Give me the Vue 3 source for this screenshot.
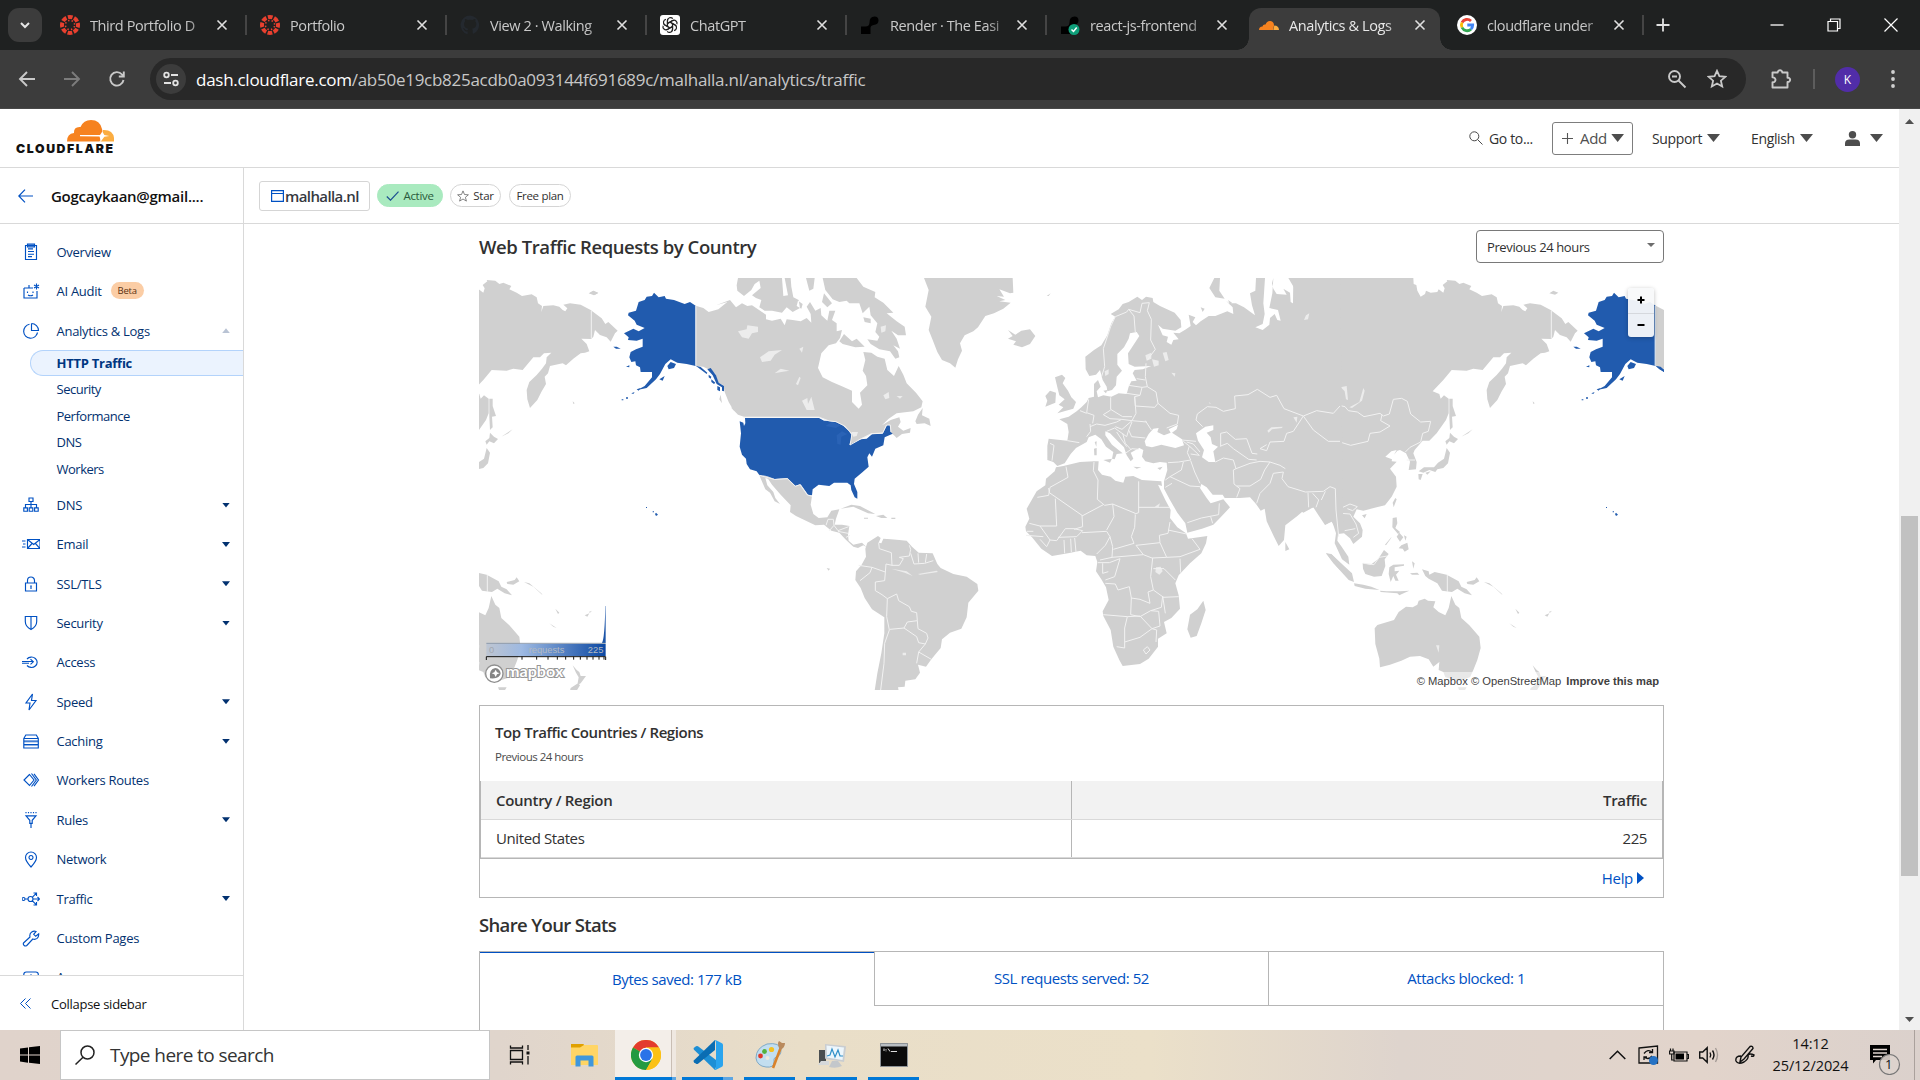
<script setup>
const tabs = [
  { icon: 'canvas', title: 'Third Portfolio D' },
  { icon: 'canvas', title: 'Portfolio' },
  { icon: 'github', title: 'View 2 · Walking' },
  { icon: 'gpt', title: 'ChatGPT' },
  { icon: 'render', title: 'Render · The Easi' },
  { icon: 'renderok', title: 'react-js-frontend' },
  { icon: 'cloud', title: 'Analytics & Logs', active: true },
  { icon: 'google', title: 'cloudflare under' },
]

const topNav = [
  { label: 'Overview', d: 'M3.5 2.5h11v14h-11zM6 5.8h5M6 8.5h6M6 11.2h6M6 13.6h4', fill: 'M5.5 1h7v3h-7z' },
  { label: 'AI Audit', badge: 'Beta', d: 'M2 6h9M2 6v10h13v-7M7 6V3M5.5 9.5v1.5M11 9.5v1.5M6 13q2.5 1.5 5 0M14.5 1.5v6M12 3l5 3M12 6l5-3' },
  { label: 'Analytics & Logs', up: true, d: 'M7.5 2.3a7 7 0 1 0 8 8.4M9.5 1.5v7h7a7 7 0 0 0-7-7M15.5 10.5a7 7 0 0 1-1.5 3' },
]
const subNav = ['HTTP Traffic', 'Security', 'Performance', 'DNS', 'Workers']
const nav = [
  { label: 'DNS', more: true, d: 'M7 2h4v3.5h-4zM9 5.5v6M3.5 11.5v-3h11v3M1.8 11.8h3.6v3.4h-3.6zM7.2 11.8h3.6v3.4h-3.6zM12.6 11.8h3.6v3.4h-3.6z' },
  { label: 'Email', more: true, d: 'M5.5 4.5h12.5v9h-12.5zM5.5 4.5l6.2 5l6.3-5M5.5 13.5l4.5-5M18 13.5l-4.5-5M0 6h3.5M1 9h2.5M0 12h3.5' },
  { label: 'SSL/TLS', more: true, d: 'M3.5 8h11v8h-11zM5.5 8v-2.5a3.5 3.5 0 0 1 7 0v2.5M9 11v3M8.2 11h1.6' },
  { label: 'Security', more: true, d: 'M3.3 2.5h11.4v5q0 5-5.7 8q-5.7-3-5.7-8zM9 2.5v13' },
  { label: 'Access', d: 'M5 6a5.7 5.2 0 1 1 0 6.5M0 8.5h11M8.5 6.2l2.8 2.6l-2.8 2.6M0 10.2h7' },
  { label: 'Speed', more: true, d: 'M10.5 1l-6.5 9h4l-1 7l7-9.5h-4.5z' },
  { label: 'Caching', more: true, d: 'M1.8 6.5l2-3.5h10.5l2 3.5v2.5h-14.5zM1.8 6.5h14.5M1.8 9v7h14.5v-7M1.8 12.5h14.5', tint: 'M2 9h14v1.5H2zM2 12.5h14v1.5H2z' },
  { label: 'Workers Routes', d: 'M7.5 3.5l-5.5 5.5l5.5 5.5l4.5-5.5zM9.5 2.5l4.8 6.5l-4.8 6.5M12 2.8l4.5 6.2l-4.5 6.2' },
  { label: 'Rules', more: true, d: 'M4 4.8h10l-3.8 4.5v3h-2.4v-3zM9 12v5M4 1v1.2M6.5 1v1.2M9 1v1.2M11.5 1v1.2M14 1v1.2' },
  { label: 'Network', d: 'M9 17q-5.5-6-5.5-9.5a5.5 5.5 0 0 1 11 0q0 3.5-5.5 9.5zM9 5.5a2 2 0 1 0 .01 0' },
  { label: 'Traffic', more: true, d: 'M0 9a1.5 1.5 0 1 0 3 0a1.5 1.5 0 1 0-3 0M3 9h3M6 9a2.5 2.5 0 1 0 5 0a2.5 2.5 0 1 0-5 0M11 9h6.5M15.5 7l2 2l-2 2M10.2 7.3l4-4M11.5 3h3v3M10.2 10.7l4 4M11.5 15h3v-3' },
  { label: 'Custom Pages', d: 'M1.5 14l6.5-6q-.8-3.5 1.7-5q2-1.3 4.3-.5l-2.3 2.8l2 2l3-2.5q.3 3-1.6 4.6q-2 1.5-4.3 .6l-6 6.5q-1.5 1-2.6 0q-1.3-1-.7-2.5z' },
  { label: 'Apps', d: 'M1.8 16v-9.5q0-2.5 2.5-2.5h9.5q2.5 0 2.5 2.5v9.5M5.5 9l3.5-2l3.5 2v4' },
]

const rows = [{ country: 'United States', traffic: '225' }]
const stats = ['Bytes saved: 177 kB', 'SSL requests served: 52', 'Attacks blocked: 1']
</script>

<template>
  <div class="screen">
    <div class="tabstrip">
      <div class="tabsearch">
        <svg width="14" height="14" viewBox="0 0 14 14"><path d="M3 5l4 4l4-4" fill="none" stroke="#e6e6e6" stroke-width="2" /></svg>
      </div>
      <div v-for="(t, i) in tabs" :key="i" class="tab" :class="{ active: t.active, bare: i === 5 }">
        <svg class="fav" width="20" height="20" viewBox="0 0 20 20">
          <g v-if="t.icon === 'canvas'" fill="none" stroke="#e8402f">
            <circle cx="10" cy="10" r="8" stroke-width="4" stroke-dasharray="4.7 1.583" stroke-dashoffset="2.35" />
            <circle cx="10" cy="10" r="4.6" stroke-width="1.5" stroke-dasharray="1.4 2.213" stroke-dashoffset="-1.1" />
          </g>
          <path v-else-if="t.icon === 'github'" fill="#24292f" d="M10 .5a9.5 9.5 0 0 0-3 18.5c.5.1.7-.2.7-.5v-2c-2.6.6-3.2-1.2-3.2-1.2c-.5-1-1-1.4-1-1.4c-.9-.6 0-.6 0-.6c1 .1 1.5 1 1.5 1c.9 1.5 2.3 1 2.8.8c.1-.6.3-1 .6-1.3c-2.1-.3-4.3-1.1-4.3-4.7c0-1 .4-1.9 1-2.5c-.1-.3-.4-1.3.1-2.6c0 0 .8-.2 2.6 1a9 9 0 0 1 4.8 0c1.8-1.2 2.6-1 2.6-1c.5 1.3.2 2.3.1 2.6c.6.6 1 1.5 1 2.5c0 3.6-2.2 4.4-4.3 4.7c.3.3.7.9.7 1.8v2.6c0 .3.2.6.7.5a9.5 9.5 0 0 0-3.4-18.2z" />
          <g v-else-if="t.icon === 'gpt'">
            <rect width="20" height="20" rx="3" fill="#fff" />
            <g fill="none" stroke="#222" stroke-width="1.2">
              <path v-for="a in 6" :key="a" :transform="'rotate(' + a * 60 + ' 10 10)'" d="M7.5 11.3V5.5a3 3 0 0 1 5.3-1.8M7.5 8.5l5-2.9a3 3 0 0 1 1.5-.3" />
            </g>
          </g>
          <g v-else-if="t.icon === 'render' || t.icon === 'renderok'">
            <path fill="#000" d="M1 19v-7.5h4.5q4 0 4-4q0-6 5-6q4 0 4 4t-5 4.5q-3 .5-3 3v6z" />
            <g v-if="t.icon === 'renderok'">
              <circle cx="14" cy="14.5" r="5.5" fill="#0f9f7a" />
              <path d="M11.5 14.5l2 2l3.2-4" fill="none" stroke="#fff" stroke-width="1.5" />
            </g>
          </g>
          <g v-else-if="t.icon === 'cloud'">
            <path fill="#f6821f" d="M0 15q0-3.5 3.5-3.6q.5-2.4 3-1.9q1.5-4 5-3.5q3.5.8 3.5 4.5l-1 4.5z" />
            <path fill="#fbad41" d="M14.3 15l1-4.5q4.5 0 4.7 4.5z" />
          </g>
          <g v-else>
            <circle cx="10" cy="10" r="10" fill="#fff" />
            <g fill="none" stroke-width="2.8">
              <path stroke="#ea4335" d="M5 7.5a5.7 5.7 0 0 1 9-1.5" />
              <path stroke="#fbbc05" d="M5 12.5a5.7 5.7 0 0 1 0-5" />
              <path stroke="#34a853" d="M14 14.2a5.7 5.7 0 0 1-9-1.7" />
              <path stroke="#4285f4" d="M10.3 10h5.4a5.7 5.7 0 0 1-1.8 4.2" />
            </g>
          </g>
        </svg>
        <span class="tabtitle">{{ t.title }}</span>
        <svg class="x" width="12" height="12" viewBox="0 0 12 12"><path d="M1.5 1.5l9 9M10.5 1.5l-9 9" stroke="#e0e0e0" stroke-width="1.6" /></svg>
      </div>
      <svg class="newtab" width="16" height="16" viewBox="0 0 16 16"><path d="M8 1.5v13M1.5 8h13" stroke="#e0e0e0" stroke-width="1.8" /></svg>
      <div class="winbtns">
        <svg width="14" height="14" viewBox="0 0 14 14"><path d="M.5 7h13" stroke="#fff" stroke-width="1.3" /></svg>
        <svg width="14" height="14" viewBox="0 0 14 14"><path d="M1 3.5h9.5v9.5h-9.5zM3.5 3.5v-2.5h9.5v9.5h-2.5" fill="none" stroke="#fff" stroke-width="1.2" /></svg>
        <svg width="14" height="14" viewBox="0 0 14 14"><path d="M.5 .5l13 13M13.5 .5l-13 13" stroke="#fff" stroke-width="1.2" /></svg>
      </div>
    </div>

    <div class="toolbar">
      <svg class="tb1" width="18" height="18" viewBox="0 0 18 18"><path d="M17 9H2.5M9 2l-7 7l7 7" fill="none" stroke="#c9c9c9" stroke-width="1.9" /></svg>
      <svg class="tb2" width="18" height="18" viewBox="0 0 18 18"><path d="M1 9h14.5M9 2l7 7l-7 7" fill="none" stroke="#7c7c7c" stroke-width="1.9" /></svg>
      <svg class="tb3" width="18" height="18" viewBox="0 0 18 18"><path d="M15.5 10a6.7 6.7 0 1 1-1.5-5.5l1.5 1.7M15.8 1.5v5h-5" fill="none" stroke="#c9c9c9" stroke-width="1.9" /></svg>
      <div class="omni">
        <div class="site">
          <svg width="18" height="18" viewBox="0 0 18 18" fill="none" stroke="#e3e3e3" stroke-width="1.8"><circle cx="4.5" cy="5" r="2.3" /><path d="M9 5h7M2 13h7" /><circle cx="13.5" cy="13" r="2.3" /></svg>
        </div>
        <div class="url"><b>dash.cloudflare.com</b>/ab50e19cb825acdb0a093144f691689c/malhalla.nl/analytics/traffic</div>
        <svg class="lens" width="20" height="20" viewBox="0 0 20 20" fill="none" stroke="#c9c9c9" stroke-width="1.9"><circle cx="7.5" cy="7.5" r="5.5" /><path d="M11.5 11.5l7 7M5 7.5h5" /></svg>
        <svg width="20" height="20" viewBox="0 0 20 20"><path d="M10 1.8l2.4 5.4l5.9 .6l-4.4 3.9l1.3 5.8l-5.2-3l-5.2 3l1.3-5.8l-4.4-3.9l5.9-.6z" fill="none" stroke="#c9c9c9" stroke-width="1.8" /></svg>
      </div>
      <svg class="puzzle" width="22" height="22" viewBox="0 0 22 22"><path d="M2.5 4.5h5.2a2.3 2.3 0 1 1 4.6 0h5.2v5.2a2.2 2.2 0 1 1 0 4.3v5.5h-15v-5.2a2.5 2.5 0 1 0 0-4.9z" fill="none" stroke="#c9c9c9" stroke-width="1.9" stroke-linejoin="round" /></svg>
      <i class="tbsep"></i>
      <div class="avatar">K</div>
      <svg width="6" height="20" viewBox="0 0 6 20" fill="#d0d0d0"><circle cx="3" cy="3" r="1.9" /><circle cx="3" cy="10" r="1.9" /><circle cx="3" cy="17" r="1.9" /></svg>
    </div>

    <div class="page">
      <div class="site-body">
        <header class="header">
          <div class="logo">
            <svg width="98" height="23" viewBox="0 0 98 23">
              <path fill="#f6821f" d="M51 22.5q0-8 7-8.5q-.5-6.5 6.5-6q3-7 10.5-7q9 0 11 9q1 3-1 7.5q-.3 3.5-1.5 5z" />
              <path fill="#fbad41" d="M84.5 22.5l2.5-11.5q10-.5 11 8v3.5z" />
              <path fill="#fff" d="M64 16h20l2.3-3.5l2 3.5l5 1.1l-5 .6l-3.3 4.5l-1.5-4.6l-19.5-.4z" />
            </svg>
            <div class="wordmark">CLOUDFLARE</div>
          </div>
          <div class="hright">
            <svg class="hs" width="14" height="14" viewBox="0 0 14 14"><circle cx="5.3" cy="5.3" r="4.5" fill="none" stroke="#4a4a4a" /><path d="M8.5 8.5l5 5" stroke="#4a4a4a" /></svg>
            <span class="ht goto">Go to...</span>
            <div class="addbtn">
              <svg width="11" height="11" viewBox="0 0 11 11"><path d="M5.5 0v11M0 5.5h11" stroke="#555" stroke-width="1.1" /></svg>
              <span>Add</span><i class="car"></i>
            </div>
            <span class="ht sup">Support</span><i class="car"></i>
            <span class="ht eng">English</span><i class="car"></i>
            <svg class="person" width="15" height="15" viewBox="0 0 15 15" fill="#4d4d4d"><circle cx="7.5" cy="3.7" r="3.7" /><path d="M0 15v-2.5q0-4 4.5-4h6q4.5 0 4.5 4v2.5z" /></svg>
            <i class="car"></i>
          </div>
        </header>

        <div class="cols">
          <aside class="side">
            <div class="account">
              <svg width="15" height="14" viewBox="0 0 15 14"><path d="M15 7H1M7 .7l-6.2 6.3l6.2 6.3" fill="none" stroke="#0051c3" stroke-width="1.2" /></svg>
              <span>Gogcaykaan@gmail....</span>
            </div>
            <nav class="nav">
              <div v-for="n in topNav" :key="n.label" class="item">
                <svg class="ic" width="18" height="18" viewBox="0 0 18 18"><path v-if="n.fill" :d="n.fill" fill="#7aa3e0" /><path :d="n.d" /></svg>
                <span>{{ n.label }}</span>
                <em v-if="n.badge">{{ n.badge }}</em>
                <i v-if="n.up" class="up"></i>
              </div>
              <div class="subs">
                <div v-for="(s, i) in subNav" :key="s" class="sub" :class="{ on: i === 0 }">{{ s }}</div>
              </div>
              <div v-for="n in nav" :key="n.label" class="item">
                <svg class="ic" width="18" height="18" viewBox="0 0 18 18"><path v-if="n.tint" :d="n.tint" fill="#8fb2e4" stroke="none" /><path :d="n.d" /></svg>
                <span>{{ n.label }}</span>
                <i v-if="n.more" class="down"></i>
              </div>
            </nav>
            <div class="collapse">
              <svg width="11" height="11" viewBox="0 0 11 11"><path d="M5.5 .5l-5 5l5 5M10.5 .5l-5 5l5 5" fill="none" stroke="#0051c3" /></svg>
              <span>Collapse sidebar</span>
            </div>
          </aside>

          <main class="main">
            <div class="crumbs">
              <div class="domain">
                <svg width="13" height="12" viewBox="0 0 13 12"><path d="M.6 .6h11.8v10.8h-11.8zM.6 3.5h11.8" fill="none" stroke="#0051c3" stroke-width="1.2" /></svg>
                <span>malhalla.nl</span>
              </div>
              <div class="pill green">
                <svg width="13" height="10" viewBox="0 0 13 10"><path d="M.8 5.5l3.7 3.7l8-8.5" fill="none" stroke="#1d4f91" stroke-width="1.2" /></svg>Active
              </div>
              <div class="pill star">
                <svg width="12" height="12" viewBox="0 0 12 12"><path d="M6 .9l1.5 3.6l3.9 .3l-3 2.5l1 3.8l-3.4-2.1l-3.4 2.1l1-3.8l-3-2.5l3.9-.3z" fill="none" stroke="#666" stroke-width=".8" /></svg>Star
              </div>
              <div class="pill plan">Free plan</div>
            </div>

            <div class="content">
              <div class="headrow">
                <h2>Web Traffic Requests by Country</h2>
                <div class="select"><span>Previous 24 hours</span><i></i></div>
              </div>

              <div class="map">
                <svg width="1185" height="412" viewBox="27 24 3555 1236">
                  <defs>
                    <linearGradient id="scale" x1="0" x2="1"><stop offset="0" stop-color="#9db4d8" stop-opacity=".35" /><stop offset=".3" stop-color="#9db9e2" /><stop offset="1" stop-color="#0b48a3" /></linearGradient>
                    <g id="asia" transform="translate(2490 0)">
                      <path fill="#d0d0d0" d="M-20 24L340 24L341 42L349 45L352 62L362 80L375 72L378 62L392 68L412 66L416 58L430 68L434 55L428 45L442 34L440 30L466 32L478 42L490 38L514 48L508 58L530 68L546 78L575 73L590 82L594 100L606 108L604 126L610 108L640 106L658 110L668 120L676 124L682 115L670 104L690 100L722 104L752 120L785 145L796 162L805 156L833 182L825 190L812 215L800 202L780 195L765 180L760 200L754 207L724 206L740 222L748 244L735 248L722 250L700 266L678 286L668 280L630 288L624 310L614 320L618 342L604 366L592 390L570 414L562 388L560 360L568 336L590 315L606 296L618 280L620 262L634 248L612 250L600 262L580 262L548 300L520 296L500 302L455 300L430 330L398 364L418 372L422 386L432 376L446 386L446 430L438 450L410 490L388 512L368 512L344 540L340 550L350 576L348 598L326 600L330 575L318 550L300 540L292 542L282 554L290 540L274 544L256 560L276 568L275 574L290 575L270 596L288 620L290 650L275 680L255 706L230 712L190 722L170 718L160 740L180 760L188 780L186 800L160 822L150 805L132 790L114 792L112 812L125 830L145 860L148 884L126 868L104 820L108 790L96 752L75 765L55 735L40 712L10 728L-30 700Z" />
                      <g fill="#d0d0d0">
                        <path d="M448 386L458 386L458 408L468 438L456 440L458 472L450 480L448 440ZM450 488L462 500L474 507L462 520L448 514L440 524L436 514L448 504ZM440 534L450 548L444 580L430 594L412 598L406 606L388 600L370 608L356 604L372 592L402 592L414 578L432 566ZM355 612L368 612L362 630L356 628ZM376 608L392 604L382 614ZM278 698L286 684L290 688L281 712ZM186 736L200 732L194 745ZM278 744L290 742L292 760L286 774L300 786L294 792L277 772ZM312 796L320 800L316 812ZM298 788L310 802L300 815L290 800ZM304 826L322 818L326 838L314 845L308 836L296 835ZM255 824L275 800L272 806L258 826ZM78 850L94 852L130 886L156 910L162 936L146 930L110 890ZM162 940L190 944L214 950L238 960L196 956L164 948ZM188 880L212 884L234 868L252 840L266 852L254 868L256 888L245 918L222 920L196 912L189 896ZM268 892L280 884L312 883L312 887L284 892L284 904L298 902L288 914L296 932L286 932L280 918L272 936L266 912ZM336 874L344 880L340 896ZM330 910L352 908L358 914L336 914ZM240 962L260 964L300 964L328 962L314 968L298 976L292 970L242 966ZM366 898L386 904L388 914L404 906L440 914L476 934L484 950L500 958L516 976L494 970L472 956L456 966L426 962L412 940L386 926L376 918ZM500 936L524 930L530 922L538 934L520 944L502 942ZM552 936L580 950L608 976L604 970L568 940ZM628 1060L650 1074L640 1070ZM646 1016L658 1028L654 1032ZM734 1036L748 1030L742 1040ZM746 1026L756 1022L750 1028ZM748 70L760 62L775 68L765 74ZM484 500L518 478L505 490ZM698 394L704 400L700 402Z" />
                        <path d="M224 1075L232 1065L262 1056L282 1050L296 1026L318 1010L338 1012L352 1004L356 992L374 986L384 992L406 994L400 1012L416 1026L436 1036L446 1014L454 978L466 1004L478 1014L484 1044L508 1066L538 1100L542 1134L532 1170L520 1200L510 1222L478 1232L436 1222L430 1206L416 1200L418 1176L400 1190L386 1168L360 1158L330 1160L304 1172L270 1184L240 1192L238 1166L226 1122ZM474 1252L500 1252L494 1262L478 1262ZM698 1186L710 1200L718 1206L722 1218L738 1218L722 1240L712 1245L716 1222L708 1208ZM714 1240L720 1246L710 1262L690 1262L692 1254Z" />
                      </g>
                      <path class="bd" d="M754 122V206M442 914V966M-5 440L20 442L50 422L100 430L108 404L135 410L145 422L172 426L192 440L240 430L250 438L268 432L280 388L305 385L322 394L332 432L362 456L392 454L385 484L368 490L362 516L330 532L316 546M10 440L40 466L42 488L66 494L86 514L120 516L152 526L204 514L210 490L240 486L270 468L242 452L246 434M0 660L50 664L86 650L102 660L104 700L120 716L150 702L172 710L158 722L142 716M104 702L98 720L116 718L124 736L96 740M124 730L150 732L168 762L176 790L160 802M134 782L166 776M190 880L222 884L238 862L262 858M0 660L5 690L22 706M60 700L78 662M320 570H345" />
                      <path class="lake" d="M148 412L178 396L190 354L194 362L186 392L156 414ZM122 352L140 348L144 390L138 388L134 364ZM12 152L20 134L30 130L24 150ZM408 1126L418 1126L416 1148Z" />
                    </g>
                  </defs>
                  <use href="#asia" />
                  <use href="#asia" x="-2880" />

                  <g transform="translate(1410 0)">
                    <path fill="#d0d0d0" d="M1200 24L1045 24L1064 56L1066 104L1052 96L1050 68L1030 56L1040 74L1010 72L1000 56L996 40L1000 24L997 70L988 114L1014 120L1022 152L1012 150L1004 132L990 144L988 164L968 180L946 172L968 162L974 132L970 100L975 24L948 24L946 62L930 70L936 106L945 136L912 112L888 100L868 100L858 92L878 112L880 132L862 124L826 138L806 138L782 154L768 166L758 156L766 142L746 134L752 168L738 178L718 190L700 188L716 208L700 210L694 224L680 216L684 200L668 196L654 164L668 176L706 182L724 172L722 150L704 128L660 108L640 96L638 84L618 80L606 90L592 80L566 96L548 102L536 118L512 132L526 140L514 160L502 196L484 226L462 240L436 260L437 298L448 318L468 314L480 300L488 330L500 350L502 364L516 360L528 346L530 320L546 302L532 284L532 252L552 232L566 206L570 190L590 186L598 198L576 232L564 250L566 282L584 290L634 288L608 298L584 300L578 310L590 332L574 334L566 350L560 372L536 370L514 380L490 376L474 382L470 364L482 350L474 330L462 342L462 380L446 384L440 396L424 412L410 424L386 440L358 448L382 462L386 486L382 512L326 506L322 528L322 570L340 576L352 588L374 580L392 552L408 534L440 516L446 502L466 494L484 508L498 530L520 546L516 566L524 568L530 552L548 550L516 524L496 496L496 484L510 490L530 510L552 532L560 556L572 574L580 566L572 548L598 534L610 540L606 560L616 574L640 580L660 576L680 578L682 600L672 634L672 656L690 690L712 728L736 760L742 788L786 776L820 764L842 742L870 712L850 688L836 692L812 700L800 684L780 654L784 642L800 652L818 674L848 674L854 684L900 684L930 682L948 702L962 722L974 716L980 754L1002 800L1016 828L1032 810L1036 766L1072 738L1100 714L1130 712L1140 730L1156 764L1175 755L1190 780L1210 780Z" />
                    <path fill="#d0d0d0" d="M348 592L370 588L420 576L462 574L476 574L474 600L486 614L512 620L526 632L550 638L556 620L580 618L606 630L640 632L664 634L666 648L654 644L676 690L692 720L690 744L712 772L738 790L744 806L802 798L798 820L784 850L750 880L716 916L706 940L716 976L720 1016L694 1044L672 1056L680 1090L654 1106L654 1130L626 1166L600 1182L548 1188L538 1170L520 1130L512 1080L490 1038L488 1024L506 990L498 952L484 928L468 904L472 876L466 858L440 856L422 842L384 850L336 858L304 836L276 802L258 784L256 770L268 746L260 716L290 664L316 646L318 626L344 604Z" />
                    <path fill="#d0d0d0" d="M790 992L797 1020L784 1060L770 1098L752 1103L742 1078L750 1034L772 1018ZM1036 816L1048 838L1036 843ZM345 322L366 314L376 324L368 340L384 362L394 382L408 396L400 416L378 422L352 430L370 412L356 404L374 388L358 376L352 352ZM316 378L330 362L348 368L346 398L316 410L322 392ZM204 180L226 194L244 182L270 178L286 198L270 222L246 232L220 224L228 214L204 206L218 198ZM823 24L808 54L826 82L854 86L838 62L840 24ZM782 112L794 116L788 126ZM864 90L876 98L870 104ZM490 570L516 566L510 578ZM462 536L470 534L470 556L463 556ZM464 516L470 514L469 530ZM580 590L604 592L590 596ZM652 594L668 590L660 600ZM490 362L502 360L498 370ZM320 78L332 70L326 78ZM1158 850L1176 854L1200 880V900L1180 880Z" />
                    <path fill="#fff" d="M618 528L614 514L626 492L640 476L656 474L652 486L672 496L692 488L686 478L714 464L710 478L696 488L726 508L732 526L706 534L664 524L636 532ZM768 490L796 470L820 466L820 480L800 488L812 502L816 522L834 530L820 544L826 576L806 576L786 562L792 540L774 512Z" />
                    <path class="lake" d="M616 256L634 248L634 266L620 272ZM636 268L656 272L656 286L642 290ZM668 248L680 246L686 270L676 274ZM694 308L706 310L704 320ZM494 304L506 298L506 312L496 318ZM648 892L662 890L668 904L658 914L646 906ZM982 482L994 472L1028 470L1026 474L996 478L986 488ZM1060 442L1072 440L1070 458ZM1092 150L1098 136L1108 130L1104 148ZM644 710L660 700L656 712ZM806 396L812 400L810 402Z" />
                    <path class="bd" d="M484 322L494 290L490 236L512 170L526 140L560 126L566 118L582 138L586 188M566 118L600 128L606 100L628 98L622 122L634 148L632 210L646 238L622 270M618 280L616 320L622 350M590 326L616 330M566 346L606 352M622 350L648 366L654 400L690 430L716 436L712 462L680 474M560 370L600 376L606 352L622 350M600 376L584 380L586 408L644 412L654 400M584 380L588 430L576 452L620 456M512 382V418L548 440L576 440M446 388L440 428L462 436L458 460M420 422L440 430M490 434L512 420M490 434L510 446L545 448M450 470L470 462L495 466L530 456L545 448L576 452L546 478L526 470M440 500L452 484L450 462M500 484L524 474L560 500L566 480M530 486L546 510L560 530M548 490L556 520L574 540M576 456L566 480L575 500L616 504M616 452L634 480M556 550L576 536L596 538M382 512L418 518M330 520L342 526L336 572M730 514L748 528L742 548L752 570L716 576L684 578M748 528L778 556L752 552M740 516L760 522L780 546M726 510L768 514M788 470L768 450L772 432L802 410L828 412L850 424L886 416L884 378L924 374L952 358L990 382L1010 376L1032 416L1090 438M1090 438L1060 484L1040 490L1032 514L990 516L980 542L960 536L980 524M842 530V490L860 486L886 508L920 506L936 550L952 552M842 528L862 520L880 536L926 568L950 570M826 576L850 564L880 570L888 596L880 600L882 642L900 656L890 682M888 596L930 580L960 574L990 576L974 600L962 628L930 648L890 648M990 576L1020 586L1036 596M1090 438L1120 480L1165 514L1200 514M1090 438L1130 422L1180 430L1200 408M950 700L960 670L990 640L1000 610L1030 606L1026 626L1044 650L1096 666L1150 664L1170 650L1186 656L1188 720L1196 800M1104 668L1106 712M1118 670L1136 690L1128 712M1144 690L1156 664M676 630L690 620L724 600L730 576M690 620L750 648L780 650M752 572L764 606L780 640M676 652L696 640M742 758L784 744L836 734L838 700M812 740L818 760M378 590L384 622L330 652L326 676L292 682M326 654L328 668L426 736L428 770L402 778M346 686L350 768L300 768M462 576L460 602L474 630L472 688L494 706L518 702L586 730M426 738L490 704M596 634V728L584 732M596 712H690M518 702L522 740L500 780M586 734L584 772L574 800L582 820L520 838M690 756L684 790L658 796M684 780L740 792M268 760L300 768L330 810L350 812M330 810L320 830L300 808M260 784H280M258 796L310 800M350 812L376 776L402 776L428 782L410 800L354 802M372 810L374 850M392 806L394 846M404 804L408 846M426 788L500 784L510 800L496 826L470 852M510 800L518 830L516 862L480 870M516 862L610 854L588 826L660 818L658 796M660 818L680 862L720 860L780 838L756 806M610 854L636 864L680 862M638 864L632 920L640 960L668 980M720 866L722 908M640 896L672 896L706 930M474 878H508L540 866L524 920L496 930M488 880V910L505 905M496 940L526 942L534 960L568 950L574 984L600 988L630 1000L624 966L640 960M574 984L572 1034L600 1040L632 1022L664 1012L668 978L676 1030M668 982L716 980M490 1034L562 1040L600 1038L636 1076L660 1068L656 1024L632 1022M562 1040L554 1074V1134L530 1130M554 1116L600 1102L636 1076L650 1080L648 1116M610 1140L622 1130L630 1140L618 1152Z" />
                  </g>

                  <g fill="#d0d0d0">
                    <path d="M677 107L700 114L716 126L745 118L772 96L738 106L780 90L798 112L816 100L832 108L846 106L876 126L888 134L888 148L906 152L932 146L944 166L950 148L968 150L992 154L1010 144L1024 158L1022 132L1010 110L1020 96L1036 122L1052 114L1054 136L1072 152L1078 122L1096 122L1086 150L1100 160L1100 184L1116 180L1110 204L1098 220L1076 226L1054 250L1044 294L1058 322L1086 336L1114 348L1146 362L1146 396L1166 416L1176 404L1170 368L1192 346L1188 318L1178 302L1186 270L1180 246L1204 248L1222 260L1244 266L1252 300L1272 318L1286 288L1300 314L1310 340L1338 368L1358 394L1354 412L1330 424L1280 430L1256 446L1236 466L1262 450L1288 442L1292 456L1284 470L1300 482L1322 474L1320 488L1296 492L1280 504L1272 496L1262 488L1260 464L1248 466L1238 488L1205 490L1172 506L1140 524L1146 496L1124 468L1098 455L1078 453L1046 441L825 441L790 420L776 396L764 366L760 346L745 338L735 310L715 298L700 290L677 288Z" />
                    <path d="M804 24L800 46L802 62L822 78L844 60L854 42L868 32L872 54L846 76L858 84L874 90L868 112L884 122L906 122L936 128L950 112L968 126L990 114L986 90L970 82L964 50L962 24L944 24L954 76L940 78L936 24ZM1008 24L1018 62L1030 56L1034 24ZM984 92L998 102L994 116L980 108ZM1058 24L1066 60L1088 88L1108 96L1130 92L1138 100L1168 100L1178 130L1198 110L1202 136L1222 160L1216 186L1228 200L1222 212L1192 208L1202 222L1228 238L1260 244L1276 266L1288 262L1284 244L1270 226L1290 236L1280 206L1264 182L1284 196L1308 196L1304 170L1280 154L1250 130L1270 128L1240 98L1214 82L1216 66L1180 50L1160 24ZM1062 70L1086 100L1072 112L1056 96ZM1122 192L1146 214L1160 206L1184 230L1156 232L1118 222L1108 214ZM1180 142L1202 146L1202 160L1184 156ZM1336 454L1344 434L1358 414L1356 436L1378 446L1382 468L1364 460L1340 462ZM782 412L800 420L822 436L826 442L804 434ZM752 374L756 400L748 388ZM1112 716L1144 704L1170 708L1200 724L1216 732L1194 730L1150 710ZM1218 738L1240 734L1252 744L1234 744ZM1182 743H1194V746H1182ZM1264 743H1276V747H1264Z" />
                    <path d="M868 616L890 618L914 628L952 625L976 648L990 642L1012 674L1026 678L1022 704L1030 732L1046 744L1072 742L1084 722L1108 718L1098 746L1094 764L1116 764L1138 768L1134 794L1136 812L1150 824L1176 818L1190 832L1180 826L1164 834L1150 830L1126 808L1108 788L1084 782L1062 764L1036 766L978 738L960 726L962 706L932 674L906 644L894 626L886 624L892 646L910 666L916 684L930 702L914 694L900 668L886 658Z" />
                    <path d="M1186 836L1192 818L1224 798L1232 804L1226 818L1234 820L1240 806L1262 808L1288 810L1310 812L1326 830L1346 848L1388 850L1402 882L1412 894L1450 912L1490 920L1522 942L1525 962L1495 998L1490 1042L1474 1076L1440 1088L1416 1108L1412 1134L1384 1168L1368 1190L1344 1184L1350 1208L1336 1228L1306 1232L1304 1250L1284 1252L1286 1262H1214L1222 1210L1234 1150L1243 1090L1243 1042L1206 1018L1184 984L1172 954L1156 930L1158 904L1174 886L1188 860Z" />
                    <path d="M1362 24L1376 60L1372 80L1366 110L1384 140L1376 180L1388 210L1402 246L1416 270L1440 280L1456 293L1464 268L1476 242L1470 220L1484 196L1510 184L1524 172L1546 138L1572 130L1600 116L1622 98L1588 94L1606 90L1580 78L1602 80L1588 58L1620 70L1630 68L1628 24ZM356 70L370 62L384 70L372 76ZM1070 894L1080 896L1076 902Z" />
                  </g>
                  <path class="bd" d="M1068 766L1074 748H1090L1092 766L1078 782M1092 766L1104 782L1136 770M1104 784L1134 790M1128 802L1140 796M1226 818L1228 836L1264 848L1266 886L1248 882L1244 932L1216 936V962L1236 974L1252 986L1250 1040L1258 1080L1244 1120L1242 1180L1232 1260M1166 886L1206 892L1200 908L1170 932M1206 892L1246 906M1266 886H1288L1300 866L1288 862L1318 858L1322 838L1318 826M1322 850L1332 882L1364 880L1390 872M1344 850L1346 878M1370 852L1366 878M1252 986L1280 972L1286 992L1318 1010L1324 1024L1340 1028L1342 1052L1312 1056L1302 1074L1260 1078M1302 1074L1340 1100L1346 1118L1366 1122L1374 1104L1370 1090L1344 1076L1342 1052M1366 1122L1346 1146L1340 1180M1346 1146L1384 1168" />
                  <path class="lake" d="M804 184L830 178L832 166L864 170L864 186L846 190L836 206L816 202ZM870 262L896 244L936 240L914 254L902 272L876 276ZM914 310L932 296L958 302L934 306ZM978 342L988 320L992 324L984 346ZM988 236L1000 230L996 248ZM996 392L1012 384L1014 402L1024 380L1034 420L1010 420ZM1240 376L1256 366L1258 384L1246 388ZM1280 378H1298L1290 386ZM1144 486L1164 486L1160 498L1150 500ZM1232 170L1248 166L1246 184L1234 188ZM1264 896L1310 904L1328 918L1304 908ZM1344 912L1400 902L1404 906L1350 914ZM1298 1148H1308V1156H1298Z" />

                  <g id="alaska" fill="#215bae">
                    <path d="M677 107L660 96L644 102L612 90L588 86L584 78L566 82L552 68L546 78L530 80L524 90L506 96L498 122L476 128L474 136L494 152L500 164L524 174L506 184L490 176L462 190L476 202L474 210L500 212L518 206V230L498 238L482 246L478 262L484 276L496 274L498 286L510 292L512 306L546 306L546 322L524 348L502 360L530 354L558 328L570 312L586 282L602 268L622 278L650 282L677 288Z" />
                    <path d="M592 288L602 276L618 282L612 294L596 298ZM568 328L584 318L578 332ZM500 358L512 354L506 362ZM484 370L494 366L490 372ZM468 382H474V386H468ZM455 388H460V391H455ZM430 230L440 230L452 236H438ZM468 290L478 286V292Z" />
                    <path d="M677 287L692 291L712 308L710 312L694 300ZM712 298L722 294L738 316L746 338L762 348V364L756 362L756 352L740 342L728 316ZM716 314L724 320L722 326L716 322ZM724 328L736 338L732 342L724 336ZM742 348L750 352L750 364L742 360Z" />
                  </g>
                  <path d="M677.5 107V287" stroke="#f4f4f4" stroke-width="3" />
                  <use href="#alaska" x="2880" />
                  <path fill="#d0d0d0" d="M3557 107L3582 120V298L3570 290L3557 288Z" />
                  <path fill="#215bae" d="M3557 288L3572 290L3582 300V306L3568 298ZM555 732L558 728L564 734L558 738ZM548 724H552V727H548ZM528 711H531V714H528ZM3435 732L3438 728L3444 734L3438 738ZM3428 724H3432V727H3428ZM3408 711H3411V714H3408Z" />
                  <path d="M3555.5 107V287" stroke="#f4f4f4" stroke-width="3" />
                  <path fill="#215bae" d="M825 444H1047L1062 452L1080 453L1098 456L1118 466L1136 482L1144 494L1143 512L1138 524L1172 508L1190 506L1206 493L1238 491L1250 466L1259 465L1262 486L1268 491L1244 502L1240 526L1216 536L1206 560L1198 550L1192 562L1196 590L1178 606L1154 626L1152 642L1162 666L1162 686L1154 682L1144 660L1142 646L1132 638L1092 638L1078 648L1046 644L1028 658L1026 676L1014 674L992 643L976 647L952 624L914 627L890 618L868 615L860 604L840 598L830 582L828 566L816 554L809 530L813 490L809 454L820 458L822 468L826 460Z" />
                  <path fill="#2a63b6" d="M1066 468L1086 456L1112 466L1098 474ZM1100 496L1116 484L1132 492L1114 500L1112 524L1102 522Z" />
                  <path d="M820 441.5H1047L1078 453L1098 455L1124 468L1146 492L1140 525L1170 508L1205 491L1238 489L1250 465H1261L1263 486M868 616L914 628.5L952 626L976 649L990 644L1012 675L1026 679" fill="none" stroke="#f1f1f1" stroke-width="3" />

                  <path d="M396 1119Q404 1105 406 1008H407V1119Z" fill="#1c55a8" />
                  <path d="M49 1120H407" stroke="#8b99ad" stroke-width="3" />
                  <path d="M49 1122H407V1158H49Z" fill="url(#scale)" />
                  <path d="M49 1170V1160H407V1170M156 1160v9M200 1160v9M234 1160v9M262 1160v9M287 1160v9M311 1160v9M331 1160v9M351 1160v9M369 1160v9M387 1160v9M402 1160v9" fill="none" stroke="#111" stroke-width="3" />
                  <g font-family="Liberation Sans, Arial, sans-serif" font-size="28" fill="#b3b9c1">
                    <text x="57" y="1149" fill="#a2a8b1">0</text><text x="176" y="1149" textLength="107">requests</text><text x="353" y="1149" textLength="47">225</text>
                  </g>
                  <circle cx="73" cy="1211" r="26" fill="#fff" stroke="#8f8f8f" stroke-width="4" />
                  <path d="M60 1225Q56 1197 76 1194Q90 1196 92 1210Q90 1228 60 1225Z" fill="#858585" />
                  <path d="M77 1199l4 8l8 3l-8 3l-4 8l-4-8l-8-3l8-3z" fill="#fff" />
                  <text x="108" y="1222" textLength="172" lengthAdjust="spacingAndGlyphs" font-family="Lato, sans-serif" font-weight="700" font-size="46" fill="#fff" stroke="#969696" stroke-width="6" paint-order="stroke">mapbox</text>
                </svg>
                <div class="zoom"><div><svg width="8" height="8" viewBox="0 0 8 8"><path d="M4 .5v7M.5 4h7" stroke="#000" stroke-width="2" /></svg></div><div><svg width="8" height="8" viewBox="0 0 8 8"><path d="M.5 4h7" stroke="#000" stroke-width="2" /></svg></div></div>
                <div class="attrib"><span>© Mapbox</span> <span>© OpenStreetMap</span> <b>Improve this map</b></div>
              </div>

              <section class="card">
                <h3>Top Traffic Countries / Regions</h3>
                <p>Previous 24 hours</p>
                <div class="table">
                  <div class="tr th"><div>Country / Region</div><div>Traffic</div></div>
                  <div v-for="r in rows" :key="r.country" class="tr"><div>{{ r.country }}</div><div>{{ r.traffic }}</div></div>
                </div>
                <div class="help">Help<i></i></div>
              </section>

              <h2 class="share">Share Your Stats</h2>
              <div class="stats">
                <div v-for="(s, i) in stats" :key="s" class="stat" :class="{ on: i === 0 }">{{ s }}</div>
              </div>
            </div>
          </main>
        </div>
      </div>
      <div class="scroll"><i class="sup-arrow"></i><div class="thumb"></div><i class="sdown-arrow"></i></div>
    </div>

    <div class="taskbar">
      <div class="start"><svg width="20" height="18" viewBox="0 0 20 18"><path d="M0 2.5l8-1.1v7.2H0zM9 1.3L20 0v8.6H9zM0 9.5h8v7.2l-8-1.1zM9 9.5h11V18L9 16.7z" /></svg></div>
      <div class="search">
        <svg width="20" height="20" viewBox="0 0 20 20"><circle cx="12.5" cy="7.5" r="6.5" fill="none" stroke="#222" stroke-width="1.5" /><path d="M8 12.3L.5 19.5" stroke="#222" stroke-width="1.5" /></svg>
        <span>Type here to search</span>
      </div>
      <div class="app tv"><svg width="22" height="20" viewBox="0 0 22 20" fill="none" stroke="#111" stroke-width="1.3"><path d="M1.5 5.5h12v9h-12zM1.5 .5v2.5h12v-2.5M1.5 19.500v-2.500h12v2.500M19 0v5M19 11v8.500" /><path d="M17.500 6.500h3v3h-3z" fill="#111" stroke="none" /></svg></div>
      <div class="app files"><svg width="28" height="24" viewBox="0 0 28 24"><path d="M1 1h12q1 0 1 1v3h-13z" fill="#e0a000" /><path d="M1 4.500h9l4-2.500h13q1 0 1 1v19h-27z" fill="#ffd565" /><path d="M5.500 23.500V14q0-1.500 1.500-1.500h15q1.500 0 1.500 1.500v9.500h-5v-6h-8v6z" fill="#3f97dc" /></svg></div>
      <div class="app current"><svg width="30" height="30" viewBox="0 0 30 30"><circle cx="15" cy="15" r="15" fill="#fbc116" /><path d="M15 15L2 7.5A15 15 0 0 1 28 7.5H15z" fill="#e33b2e" /><path d="M15 15l-13-7.5A15 15 0 0 0 15 30l6.5-11.3z" fill="#249a41" /><path d="M15 7.500h13A15 15 0 0 1 15 30l6.500-11.300z" fill="#fbc116" /><circle cx="15" cy="15" r="7.2" fill="#fff" /><circle cx="15" cy="15" r="5.9" fill="#2a73e8" /></svg></div>
      <div class="app open two"><svg width="30" height="30" viewBox="0 0 30 30"><path d="M1 9.8q-1-1 0-2l2-1.500q1-.5 2 0L23 20v7L22 30z" fill="#1e8fd5" /><path d="M1 20.200q-1 1 0 2l2 1.500q1 .5 2 0L22 10V0z" fill="#0a6db3" /><path d="M21.500 0q1 0 2 .5l5 2.500q1.500.7 1.500 2v20q0 1.300-1.500 2l-5 2.500q-1 .5-2 .5q1.500-1 1.500-3V3q0-2-1.500-3z" fill="#2aa4ee" /></svg></div>
      <div class="app open"><svg width="30" height="30" viewBox="0 0 30 30"><path d="M1 18q0-10 11-14q13-2 14 6q0 6-5 7q-3 1-2 5q0 6-8 5q-9-1-10-9z" fill="#c2def0" stroke="#7fa9c6" /><circle cx="5.500" cy="16" r="2.400" fill="#e0392b" /><circle cx="9.500" cy="11.500" r="2.400" fill="#56b13c" /><circle cx="16.500" cy="9.500" r="2.600" fill="#f4c020" /><circle cx="12.500" cy="18" r="2" fill="#efe7db" /><path d="M26 7l-8 21" stroke="#d9822b" stroke-width="2.600" /><path d="M24 8q-2-5 0-7l3 2l3 0q0 5-5 7z" fill="#b98a5d" /></svg></div>
      <div class="app open"><svg width="30" height="30" viewBox="0 0 30 30"><path d="M2 10h7v13h-7z" fill="#4a4e50" /><path d="M4 21h8v4h-11z" fill="#d5d8da" /><path d="M8 4l20 2q1 0 1 1l-2 15l-18-3q-1 0-1-1z" fill="#c9cdd1" /><path d="M9.500 5.500l17.500 2l-1.500 12.500l-15.500-2.500z" fill="#edf6fc" /><path d="M10 16l3-1l2-6l3 8l3-7l2 6h3" fill="none" stroke="#2f8fc8" stroke-width="1.200" /><path d="M15 21h6l4 5q-6 3-13 1z" fill="#c3c7cb" /></svg></div>
      <div class="app open"><svg width="28" height="24" viewBox="0 0 28 24"><path d="M.5 .5h27v23h-27z" fill="#0b0b0b" stroke="#8d9296" /><path d="M1 1h26v2.500h-26z" fill="#b9bec2" /><path d="M4 5.500v2.500M6 6v.8M6 7.500v.8M8 5.500l2 3M11 8.500h6" stroke="#ddd" stroke-width="1" /></svg></div>
      <div class="tray">
        <svg class="t1" width="17" height="10" viewBox="0 0 17 10"><path d="M.7 9l7.8-7.8L16.3 9" fill="none" stroke="#111" stroke-width="1.5" /></svg>
        <svg class="t2" width="22" height="20" viewBox="0 0 22 20"><path d="M1 3l18.5-2v17H1z" fill="none" stroke="#111" stroke-width="1.3" /><path d="M6 8.5q4-5 8-1.5M14.5 4v3.500h-3.500M14 11q-3 4-7.5 1.5M6 15v-3h3" fill="none" stroke="#111" stroke-width="1.3" /><circle cx="15.5" cy="15.5" r="4.5" fill="#2572c4" /></svg>
        <svg class="t3" width="20" height="15" viewBox="0 0 20 15"><path d="M5 4h13v9h-13zM18 6.5h1.5v4h-1.5" fill="none" stroke="#111" stroke-width="1.2" /><path d="M6.5 5.5h8.500v6h-8.500z" /><path d="M.5 3h4.5v3h-4.5zM1.5 3v-2.500M4 3v-2.500M2.700 6v6h2" fill="none" stroke="#111" stroke-width="1.2" /></svg>
        <svg class="t4" width="20" height="18" viewBox="0 0 20 18" fill="none" stroke="#111" stroke-width="1.4"><path d="M.7 6h3l4.5-4.3v14.6l-4.5-4.3h-3zM11 6.5q1.5 2.500 0 5M13.500 4.500q3 4.500 0 9" /><path d="M16.5 2q4 7 0 14" stroke="#a59c97" /></svg>
        <svg class="t5" width="20" height="20" viewBox="0 0 20 20" fill="none" stroke="#111" stroke-width="1.4"><path d="M5 17l1-5L15 1.5q3-1 3 2L9 14zM6 11q-6 0-5 5q2 4 8 1q5-3 4-7q2-2 6 0q0 2-3 1" /></svg>
        <div class="clock"><div>14:12</div><div>25/12/2024</div></div>
        <div class="note"><svg width="32" height="32" viewBox="0 0 32 32"><path d="M1 2h20v15h-14l-3 3.500v-3.500h-3z" /><path d="M4 6.5h14M4 10h14M4 13.5h9" stroke="#e0d5cf" stroke-width="1.5" /><circle cx="20.5" cy="21.5" r="10" fill="#ddd3cd" fill-opacity=".9" stroke="#777" stroke-width="1.2" /></svg><span>1</span></div>
        <i class="peek"></i>
      </div>
    </div>
  </div>
</template>

<style>
body { overflow: hidden; background: #fff; }
</style>

<style scoped>
* { box-sizing: border-box; }
svg { display: block; flex: none; }
.screen { width: 1920px; height: 1080px; overflow: hidden; display: flex; flex-direction: column; font-family: "Open Sans", "Noto Sans", sans-serif; color: #313131; white-space: nowrap; }

.tabstrip { height: 50px; background: #1f2121; display: flex; align-items: center; flex: none; }
.tabsearch { width: 34px; height: 34px; margin: 0 4px 0 8px; border-radius: 11px; background: #3c3c3c; display: flex; align-items: center; justify-content: center; }
.tab { width: 200px; height: 50px; padding: 0 18px 0 14px; display: flex; align-items: center; position: relative; color: #c9c9c9; }
.tab::after { content: ""; position: absolute; right: -1px; top: 15px; width: 2px; height: 20px; background: #454545; }
.tab.bare::after, .tab.active::after { display: none; }
.tab.active { margin: 8px 3px 0 3px; width: 191px; height: 42px; padding: 0 14px 8px 10px; background: #3c3c3c; border-radius: 12px 12px 0 0; color: #e8e8e8; }
.tab.active::before { content: ""; position: absolute; left: -12px; right: -12px; bottom: 0; height: 12px; background: radial-gradient(circle at 0 0, transparent 11.5px, #3c3c3c 12px) left / 12px 12px no-repeat, radial-gradient(circle at 100% 0, transparent 11.5px, #3c3c3c 12px) right / 12px 12px no-repeat; }
.tabtitle { flex: 1; margin: 0 6px 0 10px; font-size: 14.5px; letter-spacing: -.4px; mask-image: linear-gradient(90deg, #000 80%, rgba(0, 0, 0, .15)); }
.newtab { margin-left: 12px; }
.winbtns { margin-left: auto; display: flex; gap: 43px; margin-right: 22px; }

.toolbar { height: 59px; background: #3c3c3c; display: flex; align-items: center; flex: none; border-bottom: 1px solid #484848; }
.tb1 { margin-left: 18px; }
.tb2 { margin-left: 27px; }
.tb3 { margin-left: 27px; }
.omni { margin-left: 24px; width: 1596px; height: 42px; border-radius: 21px; background: #282828; display: flex; align-items: center; padding-right: 19px; }
.site { width: 30px; height: 30px; margin-left: 6px; border-radius: 15px; background: #3c3c3c; display: flex; align-items: center; justify-content: center; }
.url { margin-left: 10px; flex: 1; font-size: 17px; letter-spacing: -.27px; color: #c7c7c7; }
.url b { font-weight: 400; color: #fff; }
.lens { margin-right: 20px; }
.puzzle { margin-left: 24px; }
.tbsep { width: 2px; height: 20px; background: #5d5d5d; margin: 0 20px 0 21px; }
.avatar { width: 25px; height: 25px; border-radius: 50%; background: #512da8; color: #fff; font-size: 12px; display: flex; align-items: center; justify-content: center; margin-right: 30px; }

.page { height: 921px; flex: none; display: flex; background: #fff; overflow: hidden; }
.site-body { width: 1899px; display: flex; flex-direction: column; }
.header { height: 59px; flex: none; border-bottom: 1px solid #d9d9d9; display: flex; justify-content: space-between; }
.logo { padding: 10px 0 0 16px; }
.wordmark { font-family: Inter, sans-serif; font-weight: 900; font-size: 12.3px; line-height: 10px; letter-spacing: 1.6px; margin-top: 2px; color: #111; }
.hright { display: flex; align-items: center; padding: 0 16px 0 0; font-size: 14px; }
.ht { letter-spacing: -.35px; }
.goto { width: 43px; margin: 0 20px 0 6px; }
.addbtn { width: 81px; height: 33px; border: 1px solid #7d7d7d; border-radius: 3px; display: flex; align-items: center; padding: 0 8px 0 9px; color: #4f4f4f; font-size: 15px; letter-spacing: -.3px; }
.addbtn span { margin-left: 7px; width: 32px; }
.car { width: 13px; height: 8px; background: #4d4d4d; clip-path: polygon(0 0, 100% 0, 50% 100%); }
.sup { width: 50px; margin: 0 5px 0 19px; }
.eng { width: 43px; margin: 0 6px 0 31px; }
.person { margin: 0 10px 0 32px; }

.cols { flex: 1; display: flex; min-height: 0; }
.side { width: 244px; border-right: 1px solid #d9d9d9; display: flex; flex-direction: column; }
.account { height: 56px; flex: none; border-bottom: 1px solid #d9d9d9; display: flex; align-items: center; padding-left: 18px; gap: 18px; font-size: 15px; font-weight: 600; color: #111; letter-spacing: -.27px; }
.nav { flex: 1; min-height: 0; overflow: hidden; padding-top: 8.3px; font-size: 13px; color: #003681; letter-spacing: -.27px; }
.item { height: 39.35px; display: flex; align-items: center; padding: 0 13px 0 22px; }
.item .ic { fill: none; stroke: #0051c3; stroke-width: 1.15; }
.item span { margin-left: 16.5px; color: #023170; }
.item em { font-style: normal; font-size: 9.5px; margin: -2px 0 0 9px; width: 33px; height: 17px; line-height: 17px; border-radius: 9px; background: #fbcda5; color: #5b3212; text-align: center; }
.up, .down { margin-left: auto; width: 8px; height: 5px; }
.down { background: #023170; clip-path: polygon(0 0, 100% 0, 50% 100%); }
.up { background: #b9c3d4; clip-path: polygon(0 100%, 100% 100%, 50% 0); }
.subs { padding-bottom: 3.5px; }
.sub { height: 26.4px; line-height: 26px; margin-left: 30px; padding-left: 26.5px; color: #023170; letter-spacing: -.5px; }
.sub.on { height: 26px; line-height: 24px; padding-left: 25.5px; border: 1px solid #b3d3fb; border-right: 0; background: #ebf3fe; border-radius: 13px 0 0 13px; font-weight: 700; color: #003681; letter-spacing: -.25px; }
.collapse { height: 55px; flex: none; border-top: 1px solid #d9d9d9; display: flex; align-items: center; padding: 1px 0 0 20px; gap: 20px; font-size: 13px; letter-spacing: -.27px; color: #111; }

.main { flex: 1; min-width: 0; display: flex; flex-direction: column; }
.crumbs { height: 56px; flex: none; border-bottom: 1px solid #d9d9d9; display: flex; align-items: center; padding-left: 15px; }
.domain { width: 111px; height: 30px; border: 1px solid #d5d5d5; border-radius: 3px; display: flex; align-items: center; padding-left: 11px; font-size: 15px; font-weight: 600; color: #36393f; letter-spacing: -.6px; gap: 1px; }
.pill { height: 23px; border: 1px solid #d5d5d5; border-radius: 12px; font-size: 11.5px; letter-spacing: -.3px; display: flex; align-items: center; justify-content: center; gap: 4px; }
.green { width: 66px; margin-left: 7px; background: #a9eabf; border-color: #a9eabf; color: #2a5a3c; }
.star { width: 51px; margin-left: 7px; }
.plan { width: 62px; margin-left: 8px; }

.content { width: 1185px; margin-left: 235px; }
h2 { margin: 0; font-size: 18.5px; font-weight: 600; letter-spacing: -.43px; }
.headrow { display: flex; justify-content: space-between; align-items: center; height: 33px; margin-top: 6px; }
.select { width: 188px; height: 33px; border: 1px solid #797979; border-radius: 4px; display: flex; align-items: center; justify-content: space-between; padding: 0 8px 0 10px; font-size: 13px; letter-spacing: -.38px; }
.select i { width: 8px; height: 4px; background: #6d6d6d; clip-path: polygon(0 0, 100% 0, 50% 100%); margin-top: -3px; }
.map { margin-top: 15px; height: 412px; position: relative; overflow: hidden; }
.bd { fill: none; stroke: #f2f2f2; stroke-width: 3; stroke-linejoin: round; }
.lake { fill: #ececec; }
.zoom { position: absolute; right: 10px; top: 10px; width: 26px; height: 49px; border-radius: 3px; background: rgba(248, 249, 250, .95); box-shadow: 0 1px 4px rgba(0, 0, 0, .25); }
.zoom div { height: 24.5px; display: flex; align-items: center; justify-content: center; }
.zoom div + div { border-top: 1px solid #d5d8dd; }
.attrib { position: absolute; right: 0; bottom: 0; height: 18px; width: 254px; padding-right: 5px; text-align: right; background: rgba(255, 255, 255, .5); font: 11.2px/19px "Liberation Sans", Arial, sans-serif; color: #404040; }
.attrib b { margin-left: 2px; }

.card { margin-top: 15px; height: 193px; border: 1px solid #b6b6b6; display: flow-root; }
h3 { margin: 16px 0 0 15px; font-size: 15px; line-height: 20px; font-weight: 600; letter-spacing: -.43px; }
.card p { margin: 7px 0 16px 15px; font-size: 11.5px; line-height: 16px; letter-spacing: -.5px; color: #4a4a4a; }
.table { border: 1px solid #b6b6b6; border-top: 0; height: 78px; font-size: 15px; letter-spacing: -.4px; }
.tr { display: flex; height: 38px; border-bottom: 1px solid #d9d9d9; }
.tr div { flex: 1; line-height: 37px; padding: 0 15px; }
.tr div + div { text-align: right; border-left: 1px solid #b6b6b6; }
.th { height: 39px; background: #f2f2f2; font-weight: 600; letter-spacing: -.3px; }
.tr.th div { line-height: 39px; }
.help { height: 38px; display: flex; align-items: center; justify-content: flex-end; padding-right: 19px; gap: 4px; color: #0051c3; font-size: 15px; letter-spacing: -.3px; }
.help i { width: 7px; height: 12px; background: #0051c3; clip-path: polygon(0 0, 100% 50%, 0 100%); }
.share { height: 53px; line-height: 54px; letter-spacing: -.65px; }
.stats { display: flex; height: 90px; border: 1px solid #b6b6b6; color: #0051c3; font-size: 15px; letter-spacing: -.43px; }
.stat { flex: 1; height: 54px; line-height: 52px; text-align: center; border-left: 1px solid #b6b6b6; border-bottom: 1px solid #b6b6b6; }
.stat.on { border: 0; border-top: 1px solid #0051c3; }

.scroll { width: 21px; background: #f0f0f0; display: flex; flex-direction: column; align-items: center; }
.sup-arrow, .sdown-arrow { width: 9px; height: 5px; background: #505050; }
.sup-arrow { margin-top: 10px; clip-path: polygon(0 100%, 100% 100%, 50% 0); }
.sdown-arrow { margin-top: auto; margin-bottom: 8px; clip-path: polygon(0 0, 100% 0, 50% 100%); }
.thumb { width: 17px; height: 360px; margin-top: 392px; background: #c1c1c1; }

.taskbar { height: 50px; flex: none; display: flex; background: linear-gradient(90deg, #e0d3cb 0, #e0d5cc 500px, #e9dec8 800px, #ebe0c9 1150px, #ded4cd 1400px, #e2d4cb 1700px, #dbd1cc 1920px); }
.start { width: 60px; display: flex; align-items: center; justify-content: center; }
.search { width: 430px; height: 50px; background: #fff; border: 1px solid #c6c6c6; display: flex; align-items: center; padding-left: 14px; gap: 15px; font-size: 19px; letter-spacing: -.58px; color: #333; }
.app { width: 51px; margin-right: 11px; display: flex; align-items: center; justify-content: center; position: relative; }
.app.tv { margin: 0 13px 0 4px; }
.app.files { margin-right: 6px; }
.app.current { width: 61px; margin-right: 6px; background: linear-gradient(90deg, #f3eee9 56px, #c9beb4 56px, #c9beb4 57px, #efe8e1 57px); }
.app.current::after, .app.open::after { content: ""; position: absolute; left: 0; right: 0; bottom: 0; height: 3px; background: #0078d7; }
.app.current::after { background: linear-gradient(90deg, #0078d7 57px, #5da6e2 57px); }
.app.two::after { background: linear-gradient(90deg, #0078d7 41px, #5da6e2 41px); }
.tray { margin-left: auto; display: flex; align-items: center; }
.t2 { margin-left: 12px; }
.t3 { margin-left: 9px; }
.t4 { margin-left: 10px; }
.t5 { margin-left: 16px; }
.clock { margin-left: 17px; width: 77px; text-align: center; font-size: 14.5px; line-height: 22.5px; letter-spacing: -.1px; color: #111; }
.note { position: relative; margin-left: 20px; padding-top: 8px; }
.note span { position: absolute; left: 16px; top: 20px; font-size: 13px; line-height: 19px; color: #111; }
.peek { width: 1px; height: 50px; background: #aaa19c; margin: 0 5px 0 13px; }
</style>
